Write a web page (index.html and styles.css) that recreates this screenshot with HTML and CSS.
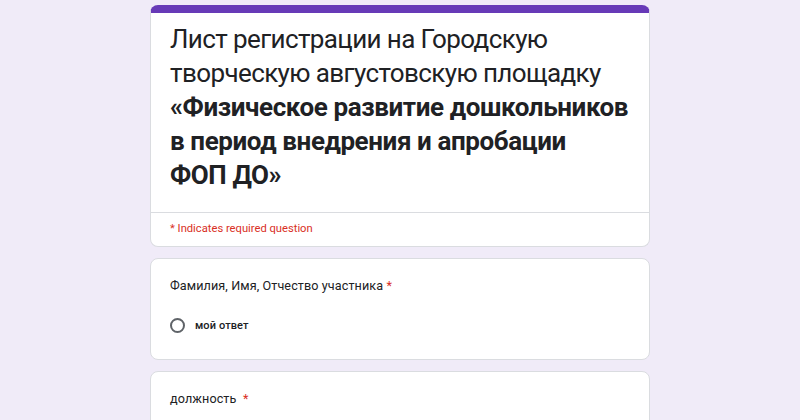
FILE: index.html
```html
<!DOCTYPE html>
<html lang="ru">
<head>
<meta charset="utf-8">
<link rel="stylesheet" href="styles.css">
</head>
<body>
<main class="form">
  <section class="card header-card">
    <h1 class="header-title">
      <span class="line light">Лист регистрации на Городскую</span>
      <span class="line light">творческую августовскую площадку</span>
      <span class="line bold">«Физическое развитие дошкольников</span>
      <span class="line bold">в период внедрения и апробации</span>
      <span class="line bold">ФОП ДО»</span>
    </h1>
    <div class="required-note">* Indicates required question</div>
  </section>

  <section class="card question">
    <div class="q-title">Фамилия, Имя, Отчество участника <span class="req">*</span></div>
    <label class="option"><span class="radio"></span><span class="opt-text">мой ответ</span></label>
  </section>

  <section class="card question">
    <div class="q-title">должность &nbsp;<span class="req">*</span></div>
  </section>
</main>
</body>
</html>
```
FILE: styles.css
```css
html, body {
  margin: 0;
  padding: 0;
  background: #f0ebf8;
  height: 100%;
  overflow: hidden;
}
body {
  font-family: Roboto, "Liberation Sans", sans-serif;
  color: #202124;
}
.form {
  width: 500px;
  margin: 0 auto;
  padding-top: 5px;
  display: flex;
  flex-direction: column;
  gap: 11px;
}
.card {
  background: #fff;
  border: 1px solid #dadce0;
  border-radius: 8px;
  box-sizing: border-box;
}
.header-card {
  border-top: 8px solid #673ab7;
}
.header-title {
  margin: 0;
  padding: 9px 20px 20px 19px;
  line-height: 34px;
  border-bottom: 1px solid #dadce0;
  color: #202124;
}
.line {
  display: block;
  white-space: nowrap;
}
.light {
  font-size: 26px;
  font-weight: 400;
  letter-spacing: -0.6px;
}
.bold {
  font-size: 26px;
  font-weight: 700;
  letter-spacing: -0.4px;
}
.required-note {
  padding: 6px 19px 7px;
  font-size: 11.2px;
  line-height: 20px;
  color: #d93025;
}
.question {
  padding: 17px 19px 24px;
}
.q-title {
  font-size: 12.6px;
  line-height: 20px;
  letter-spacing: 0.1px;
}
.req {
  color: #d93025;
}
.option {
  display: flex;
  align-items: center;
  gap: 10px;
  margin-top: 19px;
  height: 20px;
}
.radio {
  width: 11px;
  height: 11px;
  border: 2px solid #5f6368;
  border-radius: 50%;
}
.opt-text {
  font-size: 11px;
  font-weight: 500;
  letter-spacing: 0.1px;
}
```
